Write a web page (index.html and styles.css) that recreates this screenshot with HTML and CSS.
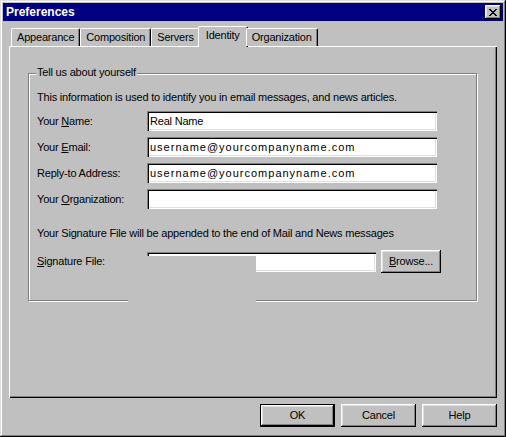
FILE: index.html
```html
<!DOCTYPE html>
<html>
<head>
<meta charset="utf-8">
<link rel="stylesheet" href="styles.css">
</head>
<body>
<div class="window">
  <div class="titlebar">
    <span class="title">Preferences</span>
    <span class="close"><svg width="8" height="7" viewBox="0 0 8 7"><path d="M0 0h2v1H0zM6 0h2v1H6zM1 1h2v1H1zM5 1h2v1H5zM2 2h4v1H2zM3 3h2v1H3zM2 4h4v1H2zM1 5h2v1H1zM5 5h2v1H5zM0 6h2v1H0zM6 6h2v1H6z" fill="#000"/></svg></span>
  </div>
  <div class="body">
    <div class="tabs">
      <div class="tab">Appearance</div>
      <div class="tab">Composition</div>
      <div class="tab">Servers</div>
      <div class="tab active">Identity</div>
      <div class="tab">Organization</div>
    </div>
    <div class="panel">
      <div class="group">
        <span class="group-title">Tell us about yourself</span>
        <p class="note">This information is used to identify you in email messages, and news articles.</p>
        <div class="fields">
          <div class="field"><span class="label">Your <u>N</u>ame:</span><span class="input">Real Name</span></div>
          <div class="field"><span class="label">Your <u>E</u>mail:</span><span class="input wide">username@yourcompanyname.com</span></div>
          <div class="field"><span class="label">Reply-to Address:</span><span class="input wide">username@yourcompanyname.com</span></div>
          <div class="field"><span class="label">Your <u>O</u>rganization:</span><span class="input"></span></div>
        </div>
        <p class="note sig-note">Your Signature File will be appended to the end of Mail and News messages</p>
        <div class="sig-row">
          <span class="label"><u>S</u>ignature File:</span>
          <span class="input sig-input"></span>
          <span class="btn browse"><u>B</u>rowse...</span>
        </div>
      </div>
      <div class="repaint-gap"></div>
    </div>
    <div class="buttons">
      <span class="btn default">OK</span>
      <span class="btn">Cancel</span>
      <span class="btn">Help</span>
    </div>
  </div>
</div>
</body>
</html>
```
FILE: styles.css
```css
body {
  margin: 0;
  background: #c0c0c0;
  font-family: "Liberation Sans", Arial, sans-serif;
  font-size: 11px;
  letter-spacing: -0.2px;
  color: #000;
}
.window {
  width: 506px;
  height: 437px;
  box-sizing: border-box;
  padding: 3px;
  background: #c0c0c0;
  box-shadow: inset -1px -1px #000, inset 1px 1px #dfdfdf, inset -2px -2px #808080, inset 2px 2px #fff;
  display: flex;
  flex-direction: column;
}
.titlebar {
  height: 18px;
  flex: none;
  background: #000080;
  display: flex;
  align-items: center;
  justify-content: space-between;
  padding: 0 2px 0 3px;
}
.title {
  color: #fff;
  font-weight: bold;
  font-size: 12px;
  letter-spacing: 0;
}
.close {
  width: 16px;
  height: 14px;
  box-sizing: border-box;
  padding: 1px 0 0 0;
  background: #c0c0c0;
  box-shadow: inset -1px -1px #000, inset 1px 1px #fff, inset -2px -2px #808080, inset 2px 2px #dfdfdf;
  display: flex;
  align-items: center;
  justify-content: center;
}
.close svg { display: block; }
.body {
  flex: 1;
  padding: 5px 6px 7px;
  display: flex;
  flex-direction: column;
}
.tabs {
  display: flex;
  align-items: flex-end;
  height: 20px;
  padding-left: 2px;
  position: relative;
  z-index: 1;
}
.tab {
  height: 18px;
  box-sizing: border-box;
  padding: 0 5px;
  border-top: 1px solid #fff;
  border-left: 1px solid #fff;
  border-right: 1px solid #000;
  border-radius: 2px 2px 0 0;
  box-shadow: inset -1px 0 #808080;
  background: #c0c0c0;
  display: flex;
  align-items: center;
  line-height: 13px;
}
.tab.active {
  height: 21px;
  margin: 0 -2px -1px;
  padding: 0 7px 3px;
}
.panel {
  height: 352px;
  flex: none;
  box-sizing: border-box;
  position: relative;
  padding: 27px 20px 0 19px;
  box-shadow: inset 1px 1px #fff, inset -1px -1px #000, inset -2px -2px #808080;
}
.group {
  position: relative;
  border: 1px solid #808080;
  box-shadow: inset 1px 1px #fff, 1px 1px #fff;
  padding: 17px 0 27px 8px;
}
.group-title {
  position: absolute;
  left: 7px;
  top: -8px;
  padding: 0 1px;
  line-height: 13px;
  background: #c0c0c0;
}
.note {
  margin: 0;
  line-height: 13px;
}
.fields {
  display: flex;
  flex-direction: column;
  gap: 6px;
  margin-top: 7px;
}
.field {
  display: flex;
  align-items: center;
}
.label {
  width: 110px;
  flex: none;
  line-height: 13px;
}
.input {
  width: 290px;
  height: 20px;
  box-sizing: border-box;
  padding: 0 2px 0 3px;
  background: #fff;
  box-shadow: inset 1px 1px #808080, inset 2px 2px #000, inset -1px -1px #fff, inset -2px -2px #dfdfdf;
  display: flex;
  align-items: center;
  line-height: 13px;
  white-space: nowrap;
}
.input.wide { letter-spacing: 1px; }
.sig-note { margin-top: 18px; }
.sig-row {
  display: flex;
  align-items: center;
  margin-top: 10px;
  height: 23px;
}
.sig-input {
  width: 229px;
  margin-right: 5px;
}
.btn {
  width: 75px;
  height: 23px;
  box-sizing: border-box;
  background: #c0c0c0;
  box-shadow: inset -1px -1px #000, inset 1px 1px #fff, inset -2px -2px #808080, inset 2px 2px #dfdfdf;
  display: flex;
  align-items: center;
  justify-content: center;
  line-height: 13px;
}
.btn.browse { width: 60px; }
.btn.default { border: 1px solid #000; }
.buttons {
  display: flex;
  justify-content: flex-end;
  gap: 6px;
  margin-top: 6px;
}
.repaint-gap {
  position: absolute;
  left: 119px;
  top: 210px;
  width: 128px;
  height: 47px;
  background: #c0c0c0;
}
```
